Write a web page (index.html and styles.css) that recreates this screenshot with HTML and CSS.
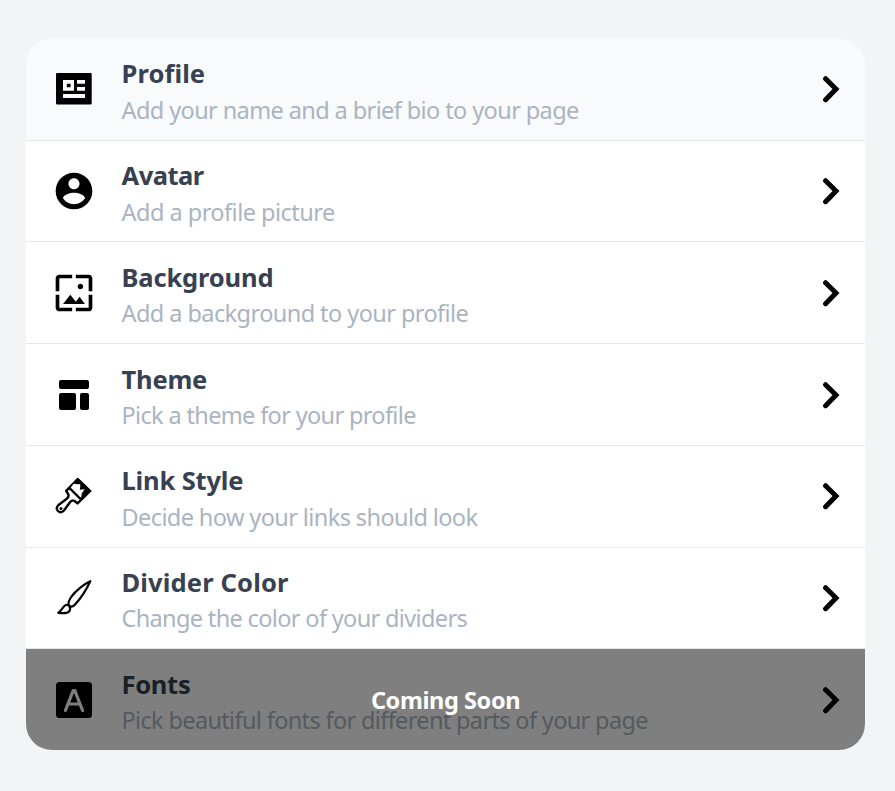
FILE: index.html
```html
<!DOCTYPE html>
<html lang="en">
<head>
<meta charset="utf-8">
<title>Customize</title>
<link rel="stylesheet" href="styles.css">
</head>
<body>
<svg class="defs" aria-hidden="true"><symbol id="chevron" viewBox="0 0 20 28"><path d="M3.6 3.7 14 14 3.6 24.7" fill="none" stroke="#000" stroke-width="5" stroke-linecap="round" stroke-linejoin="miter"/></symbol></svg>
<main class="list">
  <div class="row active">
    <svg class="icon" viewBox="0 0 44 44"><path fill-rule="evenodd" d="M5.2 6H38.5Q39.7 6 39.7 7.2V36.3Q39.7 37.5 38.5 37.5H5.2Q4 37.5 4 36.3V7.2Q4 6 5.2 6ZM11 13V23.700H22V13ZM25 13V16.700H33V13ZM25 20V23.700H33V20ZM11 27V31H33V27ZM14.800 16.700H18.600V20.200H14.800Z"/></svg>
    <div class="text"><h2 class="t1">Profile</h2><p>Add your name and a brief bio to your page</p></div>
    <svg class="chevron"><use href="#chevron"/></svg>
  </div>
  <div class="row">
    <svg class="icon" viewBox="0 0 24 24"><path d="M12 2C6.480 2 2 6.480 2 12s4.480 10 10 10 10-4.480 10-10S17.520 2 12 2zm0 3c1.660 0 3 1.340 3 3s-1.340 3-3 3-3-1.340-3-3 1.340-3 3-3zm0 14.200c-2.500 0-4.710-1.280-6-3.220.03-1.990 4-3.080 6-3.080 1.990 0 5.970 1.090 6 3.080-1.290 1.940-3.500 3.220-6 3.220z"/></svg>
    <div class="text"><h2 class="t2">Avatar</h2><p class="s2">Add a profile picture</p></div>
    <svg class="chevron"><use href="#chevron"/></svg>
  </div>
  <div class="row">
    <svg class="icon" viewBox="0 0 24 24"><path d="M4 4h7V2H4c-1.100 0-2 .9-2 2v7h2V4zm6 9l-4 5h12l-3-4-2.030 2.710L10 13zm7-4.500c0-.83-.67-1.500-1.500-1.500S14 7.670 14 8.500s.67 1.500 1.500 1.500S17 9.330 17 8.500zM20 2h-7v2h7v7h2V4c0-1.100-.9-2-2-2zm0 18h-7v2h7c1.100 0 2-.9 2-2v-7h-2v7zM4 13H2v7c0 1.100.9 2 2 2h7v-2H4v-7z"/></svg>
    <div class="text"><h2 class="t3">Background</h2><p class="s3">Add a background to your profile</p></div>
    <svg class="chevron"><use href="#chevron"/></svg>
  </div>
  <div class="row">
    <svg class="icon" viewBox="0 0 44 44"><rect x="7" y="7" width="30" height="9" rx="2"/><rect x="7" y="20" width="17" height="17" rx="2"/><rect x="28" y="20" width="9" height="17" rx="2"/></svg>
    <div class="text"><h2 class="t4">Theme</h2><p class="s4">Pick a theme for your profile</p></div>
    <svg class="chevron"><use href="#chevron"/></svg>
  </div>
  <div class="row">
    <svg class="icon" viewBox="0 0 44 44"><path fill="none" stroke="#000" stroke-width="2.400" stroke-linejoin="round" d="M25.700 5 38.200 17 25.500 29.400 22.600 27Q19.800 25.600 17.800 28.500L12 36.500Q8.800 39.800 6 37Q3.300 34.200 6.500 31L14.500 25Q17.300 23 16.300 20.300L14.200 16.800ZM17.500 14 29 25.500"/><path d="M25.700 4 39.300 17 30 26 28.400 24.500 29.200 20.100 25.300 20.100 27.500 16.500 28.500 11.600 22.600 9.700 21.700 8Z"/><path fill="#fff" d="M21.700 9.800 25.200 10.500 28.200 10.100 27.300 15.700 32.700 15.200 29.700 19.500 29.300 23.400 19 13.200Z"/><circle cx="9" cy="34.400" r="1.500"/></svg>
    <div class="text"><h2 class="t5">Link Style</h2><p>Decide how your links should look</p></div>
    <svg class="chevron"><use href="#chevron"/></svg>
  </div>
  <div class="row">
    <svg class="icon" viewBox="0 0 44 44"><path fill="none" stroke="#000" stroke-width="2.200" stroke-linejoin="round" d="M38.300 5.200C32 8 23.500 15 19.500 20.500Q15.500 26.500 16.800 29.200Q19 32.100 22.800 28.800C29 22 34.500 13.500 38.300 5.200ZM16 28.800C10.500 28.200 11 34.300 6.300 36.800C11 37.500 15 38 17.300 35.200Q19.500 31.500 16 28.800Z"/></svg>
    <div class="text"><h2 class="t6">Divider Color</h2><p class="s6">Change the color of your dividers</p></div>
    <svg class="chevron"><use href="#chevron"/></svg>
  </div>
  <div class="row">
    <svg class="icon" viewBox="0 0 44 44"><rect x="4" y="4" width="36" height="36" rx="3.600"/><path d="M13.400 32.500 21.200 12.600H22.800L30.600 32.500M16.500 26H27.500" fill="none" stroke="#fff" stroke-width="3.200" stroke-linecap="round" stroke-linejoin="round"/></svg>
    <div class="text"><h2 class="t7">Fonts</h2><p class="s7">Pick beautiful fonts for different parts of your page</p></div>
    <svg class="chevron"><use href="#chevron"/></svg>
    <div class="overlay"><span>Coming Soon</span></div>
  </div>
</main>
</body>
</html>
```
FILE: styles.css
```css
* { box-sizing: border-box; }
body { margin: 0; min-height: 791px; padding: 39px 30px 0 26px; background: #f3f4f6; font-family: "Segoe UI", "Noto Sans", sans-serif; }
.defs { position: absolute; width: 0; height: 0; }
.list { border-radius: 26px; overflow: hidden; background: #fff; }
.row { position: relative; height: 101.72px; display: flex; align-items: center; padding: 0 22px 0 26px; border-bottom: 1px solid #e5e7eb; }
.row:last-child { height: 101px; border-bottom: 0; }
.active { background: #f9fafb; }
.icon { width: 44px; height: 44px; flex: none; }
.text { flex: 1; margin-left: 25.5px; padding-top: 5px; white-space: nowrap; }
h2, p { margin: 0; line-height: 36.5px; }
h2 { font-size: 25.5px; font-weight: 700; color: #374151; letter-spacing: -.6px; }
p { font-size: 23.5px; color: #aab4c1; letter-spacing: -.6px; }
.t1 { letter-spacing: .1px; }
.t2 { letter-spacing: -.5px; }
.t3 { letter-spacing: -.15px; }
.t4 { letter-spacing: -.2px; }
.t5 { letter-spacing: -.15px; }
.t6 { letter-spacing: .15px; }
.t7 { letter-spacing: -.3px; }
.s2 { letter-spacing: -.52px; }
.s3 { letter-spacing: -.57px; }
.s4, .s6, .s7 { letter-spacing: -.65px; }
.chevron { width: 20px; height: 28px; flex: none; margin-right: 1px; }
.overlay { position: absolute; inset: 0; display: flex; align-items: center; justify-content: center; background: rgba(0,0,0,.5); color: #fff; font-size: 23.5px; font-weight: 700; letter-spacing: -.4px; }
```
